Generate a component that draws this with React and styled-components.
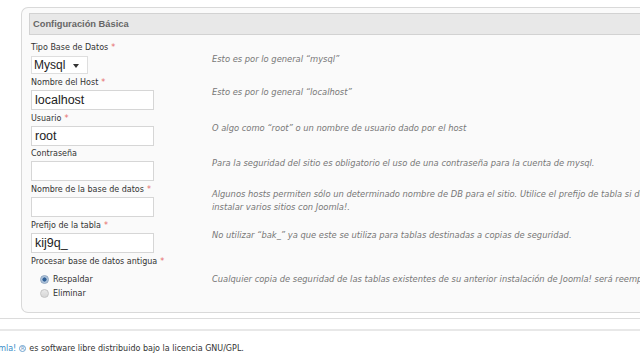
import React from "react";
import styled, { createGlobalStyle } from "styled-components";

const GlobalStyle = createGlobalStyle`
  html, body { margin: 0; padding: 0; background: #ffffff; }
  body { width: 640px; height: 360px; overflow: hidden; font-family: "DejaVu Sans", Verdana, sans-serif; }
  * { box-sizing: border-box; }
`;

const Page = styled.div`
  width: 640px;
  height: 360px;
  overflow: hidden;
  display: flex;
  flex-direction: column;
`;

const Main = styled.div`
  padding: 7px 0 5px 21px;
  border-bottom: 1px solid #dcdcdc;
`;

const Panel = styled.section`
  width: 680px;
  background: #fafafa;
  border: 1px solid #d9d9d9;
  border-right: none;
  border-radius: 7px 0 0 7px;
  padding: 5px 0 12px 7px;
`;

const Header = styled.div`
  height: 22px;
  background: #e8e8e8;
  border: 1px solid #d2d2d2;
  border-right: none;
  display: flex;
  align-items: center;
  padding-left: 3px;
  font-family: "Liberation Sans", Arial, sans-serif;
  font-weight: bold;
  font-size: 9.3px;
  color: #666666;
`;

const Form = styled.div`
  display: flex;
  flex-direction: column;
  gap: 2.8px;
  padding: 7px 0 0 2px;
`;

const Row = styled.div`
  display: grid;
  grid-template-columns: 181px 1fr;
  align-items: center;
`;

const Field = styled.div`
  display: flex;
  flex-direction: column;
  align-items: flex-start;
`;

const Label = styled.div`
  height: 13px;
  line-height: 12px;
  font-size: 8px;
  color: #333333;
  white-space: nowrap;
`;

const Req = styled.span`
  color: #e66a6a;
  margin-left: 3px;
`;

const Help = styled.div`
  font-size: 8.35px;
  line-height: 13px;
  font-style: italic;
  color: #777777;
  white-space: ${(p) => (p.$wrap ? "normal" : "nowrap")};
  width: 455px;
  margin-top: ${(p) => p.$offset || 0}px;
`;

const Input = styled.input`
  width: 123px;
  height: 20px;
  border: 1px solid #d6d6d6;
  background: #ffffff;
  padding: 0 0 0 3px;
  margin: 0;
  font-family: "Liberation Sans", Arial, sans-serif;
  font-size: 12.5px;
  color: #222222;
  outline: none;
`;

const Select = styled.div`
  width: 57px;
  height: 18px;
  border: 1px solid #dedede;
  background: #ffffff;
  display: flex;
  align-items: center;
  padding-left: 2px;
  gap: 8px;
  font-family: "Liberation Sans", Arial, sans-serif;
  font-size: 12px;
  color: #222222;
  margin-top: 1px;
`;

const Caret = styled.span`
  width: 0;
  height: 0;
  border-left: 3.5px solid transparent;
  border-right: 3.5px solid transparent;
  border-top: 4px solid #333333;
  margin-top: 1px;
`;

const Radios = styled.div`
  display: flex;
  flex-direction: column;
  padding: 5px 0 0 9px;
  gap: 2px;
`;

const RadioRow = styled.label`
  display: flex;
  align-items: center;
  gap: 4px;
  height: 12px;
  font-size: 8px;
  color: #333333;
`;

const RadioDot = styled.span`
  width: 9px;
  height: 9px;
  border-radius: 50%;
  border: 1px solid ${(p) => (p.$on ? "#8aa2bd" : "#c4c4c4")};
  background: ${(p) =>
    p.$on
      ? "radial-gradient(circle, #2f5f95 0 1.8px, #9fb8d4 2.3px, #e4ecf5 100%)"
      : "linear-gradient(#e9e9e9, #d6d6d6)"};
  flex: none;
`;

const Footer = styled.div`
  margin-top: 10px;
  border-top: 2px solid #e8e8e8;
  padding-top: 13px;
  font-size: 8px;
  color: #333333;
  white-space: nowrap;
  display: flex;
  align-items: center;
  margin-left: -14px;
`;

const Brand = styled.span`
  color: #3a8cc8;
`;

const Reg = styled.span`
  display: inline-flex;
  align-items: center;
  justify-content: center;
  width: 7px;
  height: 7px;
  border-radius: 50%;
  border: 1px solid #6fa3cf;
  color: #5a90c0;
  font-size: 5px;
  margin: 0 3px 0 3px;
  line-height: 1;
`;

const rows = [
  { label: "Tipo Base de Datos", req: true, kind: "select", help: "Esto es por lo general \u201cmysql\u201d", off: 2 },
  { label: "Nombre del Host", req: true, value: "localhost", help: "Esto es por lo general \u201clocalhost\u201d", off: -1 },
  { label: "Usuario", req: true, value: "root", help: "O algo como \u201croot\u201d o un nombre de usuario dado por el host", off: -1 },
  { label: "Contraseña", req: false, value: "", help: "Para la seguridad del sitio es obligatorio el uso de una contraseña para la cuenta de mysql.", off: -3 },
  {
    label: "Nombre de la base de datos",
    req: true,
    value: "",
    help: "Algunos hosts permiten sólo un determinado nombre de DB para el sitio. Utilice el prefijo de tabla si desea instalar varios sitios con Joomla!.",
    wrap: true,
    off: 1,
  },
  { label: "Prefijo de la tabla", req: true, value: "kij9q_", help: "No utilizar \u201cbak_\u201d ya que este se utiliza para tablas destinadas a copias de seguridad.", off: -1 },
];

export default function App() {
  return (
    <Page>
      <GlobalStyle />
      <Main>
        <Panel>
          <Header>Configuración Básica</Header>
          <Form>
            {rows.map((r) => (
              <Row key={r.label}>
                <Field>
                  <Label>
                    {r.label}
                    {r.req && <Req>*</Req>}
                  </Label>
                  {r.kind === "select" ? (
                    <Select>
                      Mysql <Caret />
                    </Select>
                  ) : (
                    <Input defaultValue={r.value} readOnly />
                  )}
                </Field>
                <Help $wrap={r.wrap} $offset={r.off}>{r.help}</Help>
              </Row>
            ))}
            <Row>
              <Field>
                <Label>
                  Procesar base de datos antigua<Req>*</Req>
                </Label>
                <Radios>
                  <RadioRow>
                    <RadioDot $on />
                    Respaldar
                  </RadioRow>
                  <RadioRow>
                    <RadioDot />
                    Eliminar
                  </RadioRow>
                </Radios>
              </Field>
              <Help $offset={4}>
                Cualquier copia de seguridad de las tablas existentes de su anterior instalación de Joomla! será reemplazada.
              </Help>
            </Row>
          </Form>
        </Panel>
      </Main>
      <Footer>
        <Brand>Joomla!</Brand>
        <Reg>R</Reg>
        es software libre distribuido bajo la licencia GNU/GPL.
      </Footer>
    </Page>
  );
}
